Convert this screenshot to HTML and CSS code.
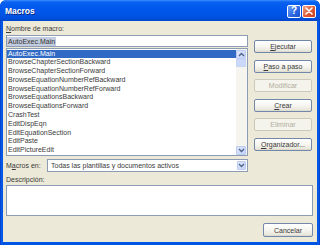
FILE: index.html
```html
<!DOCTYPE html>
<html>
<head>
<meta charset="utf-8">
<link rel="stylesheet" href="styles.css">
</head>
<body>
<div class="win">
  <div class="titlebar">
    <span class="title">Macros</span>
    <div class="tbtns">
      <div class="tb help">?</div>
      <div class="tb close">
        <svg width="8" height="8" viewBox="0 0 8 8"><path d="M1 1 L7 7 M7 1 L1 7" stroke="#fff" stroke-width="1.6" stroke-linecap="round"/></svg>
      </div>
    </div>
  </div>
  <div class="client">
    <div class="top">
      <div class="left">
        <div class="lbl"><u>N</u>ombre de macro:</div>
        <div class="input"><span class="sel">AutoExec.Main</span></div>
        <div class="list">
          <div class="items">
            <div class="item on">AutoExec.Main</div>
            <div class="item">BrowseChapterSectionBackward</div>
            <div class="item">BrowseChapterSectionForward</div>
            <div class="item">BrowseEquationNumberRefBackward</div>
            <div class="item">BrowseEquationNumberRefForward</div>
            <div class="item">BrowseEquationsBackward</div>
            <div class="item">BrowseEquationsForward</div>
            <div class="item">CrashTest</div>
            <div class="item">EditDispEqn</div>
            <div class="item">EditEquationSection</div>
            <div class="item">EditPaste</div>
            <div class="item">EditPictureEdit</div>
          </div>
          <div class="scroll">
            <div class="sbtn"><svg width="7" height="5" viewBox="0 0 7 5"><path d="M1 4 L3.5 1.5 L6 4" fill="none" stroke="#4D6185" stroke-width="1.3"/></svg></div>
            <div class="thumb"></div>
            <div class="track"></div>
            <div class="sbtn"><svg width="7" height="5" viewBox="0 0 7 5"><path d="M1 1 L3.5 3.5 L6 1" fill="none" stroke="#4D6185" stroke-width="1.3"/></svg></div>
          </div>
        </div>
      </div>
      <div class="buttons">
        <div class="btn"><u>E</u>jecutar</div>
        <div class="btn"><u>P</u>aso a paso</div>
        <div class="btn dis">Modificar</div>
        <div class="btn"><u>C</u>rear</div>
        <div class="btn dis">Eliminar</div>
        <div class="btn"><u>O</u>rganizador...</div>
      </div>
    </div>
    <div class="en-row">
      <div class="en-lbl">M<u>a</u>cros en:</div>
      <div class="combo">
        <span class="combo-text">Todas las plantillas y documentos activos</span>
        <div class="cbtn"><svg width="7" height="5" viewBox="0 0 7 5"><path d="M1 1 L3.5 3.5 L6 1" fill="none" stroke="#4D6185" stroke-width="1.3"/></svg></div>
      </div>
    </div>
    <div class="lbl desc-lbl">Descripción:</div>
    <div class="desc"></div>
    <div class="footer"><div class="btn cancel">Cancelar</div></div>
  </div>
</div>
</body>
</html>
```

FILE: styles.css
```css
html, body {
  margin: 0;
  padding: 0;
}
body {
  width: 320px;
  height: 245px;
  overflow: hidden;
  font-family: "Liberation Sans", Arial, sans-serif;
  font-size: 7px;
  color: #3a3a3a;
  background: #fff;
}
.win {
  width: 320px;
  height: 245px;
  box-sizing: border-box;
  background: linear-gradient(to right, #0034B8 0, #0A5AE8 1px, #0055E5 3px, #0055E5 317px, #0A5AE8 319px, #0034B8 320px);
  display: flex;
  flex-direction: column;
  border-radius: 6px 6px 0 0;
  overflow: hidden;
}
.titlebar {
  height: 21px;
  flex: none;
  display: flex;
  align-items: center;
  padding: 0 4px 0 5px;
  background: linear-gradient(to bottom, #3C8DFF 0, #0A62F0 2px, #0058EE 8px, #0055E6 14px, #0050DD 18px, #0046CC 21px);
  border-radius: 6px 6px 0 0;
}
.title {
  color: #fff;
  font-weight: bold;
  font-size: 8.5px;
  flex: 1;
  text-shadow: 1px 1px 0 #0A2A80;
}
.tbtns {
  display: flex;
  gap: 1px;
  margin-top: 1px;
}
.tb {
  width: 14px;
  height: 13px;
  border: 1px solid #fff;
  border-radius: 2px;
  box-sizing: border-box;
  display: flex;
  align-items: center;
  justify-content: center;
}
.help {
  background: linear-gradient(135deg, #6EA0FA, #2A66E2 60%, #1C52CC);
  color: #fff;
  font-weight: bold;
  font-size: 10px;
  line-height: 10px;
}
.close {
  background: linear-gradient(135deg, #F0A080, #DE5A35 55%, #C84020);
}
.client {
  flex: 1;
  margin: 0 3px 3px 3px;
  background: #ECE9D8;
  padding: 3px 4px 0 3px;
  display: flex;
  flex-direction: column;
}
.top {
  display: flex;
  gap: 6px;
}
.left {
  width: 242px;
  display: flex;
  flex-direction: column;
}
.lbl {
  line-height: 9px;
  height: 9px;
  white-space: nowrap;
}
.input {
  margin-top: 2px;
  height: 12px;
  box-sizing: border-box;
  border: 1px solid #8C9CB4;
  background: #fff;
  display: flex;
  align-items: center;
  padding-left: 0;
}
.sel {
  background: #C2CCDE;
  color: #333;
  line-height: 9px;
  padding: 0 1px;
}
.list {
  margin-top: 1px;
  height: 108px;
  box-sizing: border-box;
  border: 1px solid #8C9CB4;
  background: #fff;
  display: flex;
  overflow: hidden;
}
.items {
  flex: 1;
  overflow: hidden;
  padding-top: 0.5px;
}
.item {
  height: 8.8px;
  line-height: 8.8px;
  padding-left: 1px;
  white-space: nowrap;
}
.item.on {
  background: #316AC5;
  color: #fff;
}
.scroll {
  width: 11px;
  display: flex;
  flex-direction: column;
  background: #F5F4EF;
  padding-top: 1px;
  box-sizing: border-box;
}
.sbtn {
  height: 9px;
  flex: none;
  margin: 0 1px 0 0;
  border: 1px solid #BCCBEF;
  border-radius: 1px;
  box-sizing: border-box;
  background: linear-gradient(135deg, #DCE6FC, #C3D3FB);
  display: flex;
  align-items: center;
  justify-content: center;
}
.thumb {
  height: 8px;
  flex: none;
  margin: 0 1px 0 0;
  border: 1px solid #C8D6F6;
  box-sizing: border-box;
  background: #C9D8FB;
}
.track {
  flex: 1;
}
.buttons {
  width: 58px;
  display: flex;
  flex-direction: column;
  gap: 6.6px;
  margin-top: 16px;
}
.btn {
  height: 13px;
  box-sizing: border-box;
  border: 1px solid #7288A8;
  border-radius: 2px;
  background: linear-gradient(to bottom, #FFFFFF 0, #F6F5F0 50%, #E8E6DC 90%, #D8D4C6 100%);
  display: flex;
  align-items: center;
  justify-content: center;
  white-space: nowrap;
  color: #3a3a3a;
}
.btn.dis {
  border-color: #CBC8BC;
  background: #F5F4EC;
  color: #B0AC9E;
}
.en-row {
  width: 242px;
  display: flex;
  align-items: center;
  margin-top: 3px;
}
.en-lbl {
  width: 41px;
  white-space: nowrap;
}
.combo {
  flex: 1;
  height: 13px;
  box-sizing: border-box;
  border: 1px solid #8C9CB4;
  background: #fff;
  display: flex;
  align-items: center;
  padding-left: 3px;
  padding-right: 1px;
}
.combo-text {
  flex: 1;
  white-space: nowrap;
}
.cbtn {
  width: 9px;
  height: 9px;
  border: 1px solid #BCCBEF;
  border-radius: 1px;
  box-sizing: border-box;
  background: linear-gradient(135deg, #DCE6FC, #C3D3FB);
  display: flex;
  align-items: center;
  justify-content: center;
}
.desc-lbl {
  margin-top: 3px;
}
.desc {
  margin-top: 1px;
  height: 31px;
  box-sizing: border-box;
  border: 1px solid #8C9CB4;
  background: #fff;
}
.footer {
  display: flex;
  justify-content: flex-end;
  margin-top: 7px;
}
.cancel {
  width: 50px;
  height: 14px;
}
```
